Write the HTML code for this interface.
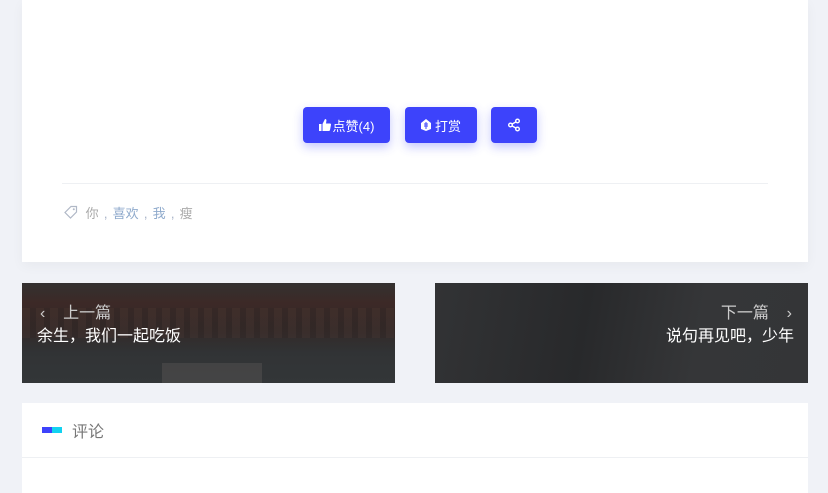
<!DOCTYPE html>
<html><head><meta charset="utf-8"><style>
*{margin:0;padding:0;box-sizing:border-box}
body{width:828px;height:486px;background:#f0f2f7;font-family:"Liberation Sans","Noto Sans CJK SC",sans-serif;position:relative;overflow:hidden}
.card{position:absolute;background:#fff}
.btn{position:absolute;top:107px;height:36px;background:#3d43fb;border-radius:4px;color:#fff;font-size:13px;display:flex;align-items:center;justify-content:center;box-shadow:0 4px 10px rgba(61,67,251,.3)}
.nav{position:absolute;top:283px;width:373px;height:100px;overflow:hidden}
.t1{position:absolute;top:16px;font-size:16px;color:#ccc}
.t2{position:absolute;top:39px;font-size:16px;color:#fff}
.c{display:inline-block;width:14px;text-align:center}
</style></head><body>
<div class="card" style="left:22px;top:0;width:786px;height:262px;box-shadow:0 4px 12px rgba(0,0,0,.04)">
<div style="position:absolute;left:40px;top:183px;width:706px;height:1px;background:#eef0f3"></div>
<div style="position:absolute;left:42px;top:203px;font-size:13px;color:#a8b4c8;white-space:nowrap">
<svg width="14" height="14" viewBox="0 0 14 14" style="vertical-align:-1px;margin-right:4px"><path d="M7 1.5h5.5v5.5l-6 6-5.5-5.5z" fill="none" stroke="#b0b8c6" stroke-width="1.2"/><circle cx="9.8" cy="4.2" r="1" fill="#b0b8c6"/></svg>
<span style="color:#aaa">你</span><span class="c">,</span><span style="color:#8faacc">喜欢</span><span class="c">,</span><span style="color:#8faacc">我</span><span class="c">,</span><span style="color:#aaa">瘦</span></div>
</div>
<div class="btn" style="left:303px;width:87px"><svg width="12" height="12" viewBox="0 0 12 12" style="margin-right:2px"><path d="M0 5h2.5v7H0zM3.5 5L6 0c1 0 1.6.7 1.4 1.8L7 4.5h4c.7 0 1.1.6 1 1.2l-1 5.3c-.1.6-.6 1-1.2 1H3.5z" fill="#fff"/></svg>点赞(4)</div>
<div class="btn" style="left:405px;width:72px"><svg width="10" height="12" viewBox="0 0 10 12" style="margin-right:4px"><path d="M5 0L10 4v6L5 12 0 10V4z" fill="#fff"/><path d="M5 3v7M3 5h4M3 7h4" stroke="#3d43fb" stroke-width="1"/></svg>打赏</div>
<div class="btn" style="left:491px;width:46px"><svg width="14" height="14" viewBox="0 0 14 14"><g fill="none" stroke="#fff" stroke-width="1.4"><circle cx="10.5" cy="3" r="1.8"/><circle cx="3.5" cy="7" r="1.8"/><circle cx="10.5" cy="11" r="1.8"/><path d="M5 6.1l4-2.2M5 7.9l4 2.2"/></g></svg></div>

<div class="nav" style="left:22px;background:linear-gradient(180deg,#3d3a39 0,#4a2f2b 20%,#3b2e2c 45%,#3a3d40 70%,#3d4144 100%)">
<div style="position:absolute;left:0;top:25px;width:373px;height:30px;background:repeating-linear-gradient(90deg,#5a3e38 0 8px,#3a2a28 8px 14px);opacity:.4"></div>
<div style="position:absolute;left:140px;top:80px;width:100px;height:20px;background:#7a7574;opacity:.4"></div>
<div style="position:absolute;inset:0;background:rgba(30,30,30,.3)"></div>
<div class="t1" style="left:18px">‹&nbsp;&nbsp;&nbsp;&nbsp;上一篇</div>
<div class="t2" style="left:15px">余生，我们一起吃饭</div>
</div>
<div class="nav" style="left:435px;background:linear-gradient(100deg,#323335 0,#28292b 40%,#353638 70%,#343537 100%)">
<div class="t1" style="right:16px">下一篇&nbsp;&nbsp;&nbsp;&nbsp;›</div>
<div class="t2" style="right:14px">说句再见吧，少年</div>
</div>

<div class="card" style="left:22px;top:403px;width:786px;height:90px">
<div style="position:absolute;left:20px;top:24px;width:10px;height:6px;background:#3d43fb"></div>
<div style="position:absolute;left:30px;top:24px;width:10px;height:6px;background:#12d2f0"></div>
<div style="position:absolute;left:50px;top:15px;font-size:16px;color:#777">评论</div>
<div style="position:absolute;left:0;top:54px;width:786px;height:1px;background:#eef0f3"></div>
</div>
</body></html>
